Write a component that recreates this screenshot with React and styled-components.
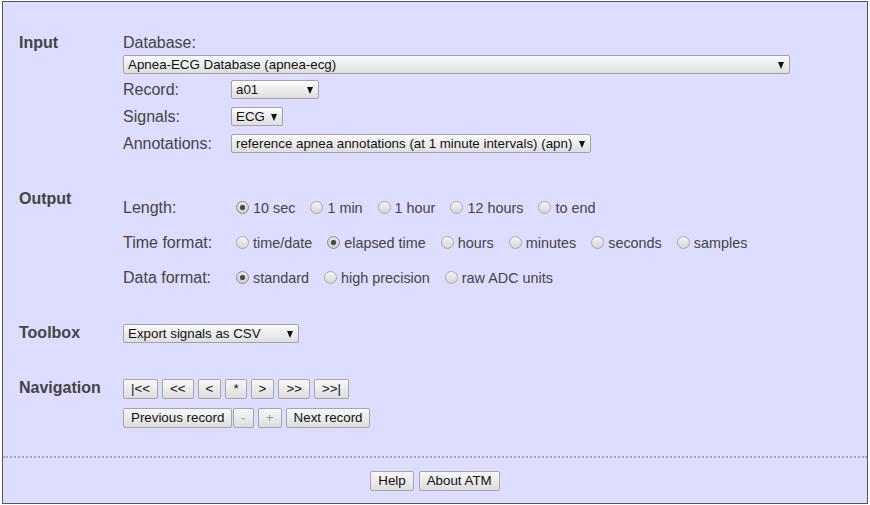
import React from "react";
import styled, { createGlobalStyle } from "styled-components";

const GlobalStyle = createGlobalStyle`
  html, body {
    margin: 0;
    padding: 0;
    background: #fff;
  }
  body {
    font-family: "Liberation Sans", Arial, sans-serif;
    color: #444;
  }
`;

const Frame = styled.div`
  box-sizing: border-box;
  height: 503px;
  margin: 1px 2px 0 2px;
  border: 1px solid #555;
  background: #ddf;
  display: flex;
  flex-direction: column;
`;

const Main = styled.div`
  padding: 31px 0 0 16px;
`;

const Section = styled.section`
  display: grid;
  grid-template-columns: 104px 1fr;
  margin-top: ${({ $top }) => $top || 0}px;
`;

const Heading = styled.div`
  font-size: 16px;
  font-weight: bold;
  line-height: 20px;
  color: #444;
`;

const Content = styled.div`
  display: flex;
  flex-direction: column;
  align-items: flex-start;
  padding-top: ${({ $pad }) => $pad || 0}px;
`;

const FieldLabel = styled.div`
  font-size: 16px;
  line-height: 20px;
  color: #444;
`;

const Rows = styled.div`
  margin-top: ${({ $top }) => $top || 0}px;
  display: flex;
  flex-direction: column;
`;

const Row = styled.div`
  display: grid;
  grid-template-columns: 108px auto;
  align-items: center;
  height: ${({ $h }) => $h}px;
`;

const SelectBox = styled.div`
  position: relative;
  display: inline-flex;
  width: ${({ $w }) => $w}px;
  margin-top: ${({ $top }) => $top || 0}px;

  &::after {
    content: "";
    position: absolute;
    right: 6px;
    top: 50%;
    margin-top: -3px;
    width: 0;
    height: 0;
    border-left: 3.5px solid transparent;
    border-right: 3.5px solid transparent;
    border-top: 7px solid #111;
    pointer-events: none;
  }
`;

const Select = styled.select`
  appearance: none;
  -webkit-appearance: none;
  box-sizing: border-box;
  width: 100%;
  height: 19px;
  margin: 0;
  padding: 0 18px 0 4px;
  border: 1px solid #a3a3a3;
  border-radius: 2px;
  background: linear-gradient(#fbfbfb, #dedede);
  font-family: "Liberation Sans", Arial, sans-serif;
  font-size: 13.3333px;
  line-height: 17px;
  color: #111;
  outline: none;
`;

const RadioGroup = styled.div`
  display: flex;
  align-items: center;
`;

const Option = styled.label`
  display: inline-flex;
  align-items: center;
  margin-right: 10px;
  font-size: 14.4px;
  line-height: 18px;
  color: #444;
`;

const Radio = styled.input.attrs({ type: "radio" })`
  appearance: none;
  -webkit-appearance: none;
  box-sizing: border-box;
  width: 13px;
  height: 13px;
  margin: 0 4px 0 5px;
  border: 1px solid #a8a8a8;
  border-radius: 50%;
  background: linear-gradient(#f4f4f4, #d6d6d6);

  &:checked {
    border-color: #8c8c8c;
    background: radial-gradient(circle, #4d4d4d 0 2.3px, transparent 3px),
      linear-gradient(#e6e6e6, #cfcfcf);
  }
`;

const ButtonRow = styled.div`
  display: flex;
  gap: 4px;
  margin-top: ${({ $top }) => $top || 0}px;
`;

const Button = styled.button`
  box-sizing: border-box;
  height: 20px;
  margin: 0 0 0 ${({ $tight }) => ($tight ? "-3px" : "0")};
  padding: 0 7px;
  border: 1px solid #a6a6a6;
  border-radius: 2px;
  background: linear-gradient(#f8f8f8, #dddddd);
  font-family: "Liberation Sans", Arial, sans-serif;
  font-size: 13.3333px;
  line-height: 18px;
  color: ${({ disabled }) => (disabled ? "#9a9a9a" : "#111")};
`;

const Divider = styled.div`
  margin-top: 28px;
  border-top: 2px dotted #aaa;
`;

const Footer = styled.div`
  display: flex;
  justify-content: center;
  gap: 5px;
  padding-top: 13px;
`;

const lengths = ["10 sec", "1 min", "1 hour", "12 hours", "to end"];
const timeFormats = ["time/date", "elapsed time", "hours", "minutes", "seconds", "samples"];
const dataFormats = ["standard", "high precision", "raw ADC units"];

const RadioSet = ({ name, options, checked }) => (
  <RadioGroup>
    {options.map((o) => (
      <Option key={o}>
        <Radio name={name} defaultChecked={o === checked} />
        {o}
      </Option>
    ))}
  </RadioGroup>
);

export default function App() {
  return (
    <>
      <GlobalStyle />
      <Frame>
        <Main>
          <Section>
            <Heading>Input</Heading>
            <Content>
              <FieldLabel>Database:</FieldLabel>
              <SelectBox $w={667} $top={2}>
                <Select defaultValue="apnea-ecg">
                  <option value="apnea-ecg">Apnea-ECG Database (apnea-ecg)</option>
                </Select>
              </SelectBox>
              <Rows $top={2}>
                <Row $h={27}>
                  <FieldLabel>Record:</FieldLabel>
                  <SelectBox $w={88}>
                    <Select>
                      <option>a01</option>
                    </Select>
                  </SelectBox>
                </Row>
                <Row $h={27}>
                  <FieldLabel>Signals:</FieldLabel>
                  <SelectBox $w={52}>
                    <Select>
                      <option>ECG</option>
                    </Select>
                  </SelectBox>
                </Row>
                <Row $h={27}>
                  <FieldLabel>Annotations:</FieldLabel>
                  <SelectBox $w={360}>
                    <Select>
                      <option>reference apnea annotations (at 1 minute intervals) (apn)</option>
                    </Select>
                  </SelectBox>
                </Row>
              </Rows>
            </Content>
          </Section>

          <Section $top={32}>
            <Heading>Output</Heading>
            <Content $pad={1}>
              <Row $h={35}>
                <FieldLabel>Length:</FieldLabel>
                <RadioSet name="length" options={lengths} checked="10 sec" />
              </Row>
              <Row $h={35}>
                <FieldLabel>Time format:</FieldLabel>
                <RadioSet name="tfmt" options={timeFormats} checked="elapsed time" />
              </Row>
              <Row $h={35}>
                <FieldLabel>Data format:</FieldLabel>
                <RadioSet name="dfmt" options={dataFormats} checked="standard" />
              </Row>
            </Content>
          </Section>

          <Section $top={28}>
            <Heading>Toolbox</Heading>
            <Content>
              <SelectBox $w={176} $top={1}>
                <Select>
                  <option>Export signals as CSV</option>
                </Select>
              </SelectBox>
            </Content>
          </Section>

          <Section $top={35}>
            <Heading>Navigation</Heading>
            <Content $pad={1}>
              <ButtonRow>
                <Button>|&lt;&lt;</Button>
                <Button>&lt;&lt;</Button>
                <Button>&lt;</Button>
                <Button>*</Button>
                <Button>&gt;</Button>
                <Button>&gt;&gt;</Button>
                <Button>&gt;&gt;|</Button>
              </ButtonRow>
              <ButtonRow $top={9}>
                <Button>Previous record</Button>
                <Button $tight disabled>-</Button>
                <Button disabled>+</Button>
                <Button>Next record</Button>
              </ButtonRow>
            </Content>
          </Section>
        </Main>

        <Divider />
        <Footer>
          <Button>Help</Button>
          <Button>About ATM</Button>
        </Footer>
      </Frame>
    </>
  );
}
